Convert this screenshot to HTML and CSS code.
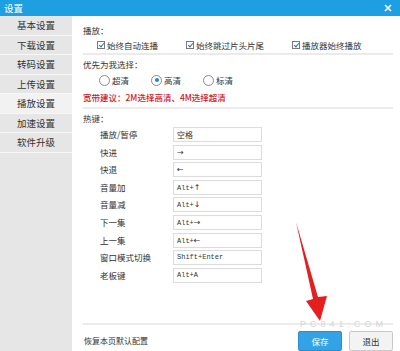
FILE: index.html
```html
<!DOCTYPE html>
<html lang="zh-CN">
<head>
    <meta charset="UTF-8">
    <meta name="viewport" content="width=device-width, initial-scale=1.0">
    <title>设置</title>
    <link rel="stylesheet" href="styles.css">
</head>
<body>
    <div class="window">
        <header class="titlebar">
            <span class="title">设置</span>
            <svg class="close" width="8" height="8" viewBox="0 0 8 8">
                <path d="M1 1L7 7M7 1L1 7" stroke="#fff" stroke-width="1.6" fill="none"/>
            </svg>
        </header>

        <div class="content">
            <ul class="sidebar">
                <li>基本设置</li>
                <li>下载设置</li>
                <li>转码设置</li>
                <li>上传设置</li>
                <li class="active">播放设置</li>
                <li>加速设置</li>
                <li>软件升级</li>
            </ul>

            <main class="main">
                <div class="panel">
                    <p class="group-title first">播放：</p>
                    <div class="check-row">
                        <label class="check"><span class="box"></span>始终自动连播</label>
                        <label class="check"><span class="box"></span>始终跳过片头片尾</label>
                        <label class="check"><span class="box"></span>播放器始终播放</label>
                    </div>
                    <div class="divider"></div>

                    <p class="group-title">优先为我选择：</p>
                    <div class="radio-row">
                        <label class="radio"><span class="dot"></span>超清</label>
                        <label class="radio selected"><span class="dot"></span>高清</label>
                        <label class="radio"><span class="dot"></span>标清</label>
                    </div>
                    <p class="tip">宽带建议：2M选择高清、4M选择超清</p>
                    <div class="divider"></div>

                    <p class="group-title">热键：</p>
                    <div class="hotkeys">
                        <div class="hotkey"><span class="key-name">播放/暂停</span><span class="key-box cn">空格</span></div>
                        <div class="hotkey"><span class="key-name">快进</span><span class="key-box"><span class="arr">→</span></span></div>
                        <div class="hotkey"><span class="key-name">快退</span><span class="key-box"><span class="arr">←</span></span></div>
                        <div class="hotkey"><span class="key-name">音量加</span><span class="key-box">Alt+<span class="arr">↑</span></span></div>
                        <div class="hotkey"><span class="key-name">音量减</span><span class="key-box">Alt+<span class="arr">↓</span></span></div>
                        <div class="hotkey"><span class="key-name">下一集</span><span class="key-box">Alt+<span class="arr">→</span></span></div>
                        <div class="hotkey"><span class="key-name">上一集</span><span class="key-box">Alt+<span class="arr">←</span></span></div>
                        <div class="hotkey"><span class="key-name">窗口模式切换</span><span class="key-box">Shift+Enter</span></div>
                        <div class="hotkey"><span class="key-name">老板键</span><span class="key-box">Alt+A</span></div>
                    </div>
                </div>

                <footer class="footer">
                    <span class="reset">恢复本页默认配置</span>
                    <div class="buttons">
                        <button class="btn primary">保存</button>
                        <button class="btn">退出</button>
                    </div>
                </footer>
            </main>
        </div>

        <!-- annotation drawn over the screenshot -->
        <svg class="arrow" width="400" height="351" viewBox="0 0 400 351">
            <polygon points="296,222 318,297 327,296 320,321 306,301 313,299" fill="#e3201f"/>
        </svg>
        <div class="watermark">PC841.COM</div>
    </div>
</body>
</html>
```

FILE: styles.css
```css
body {
    margin: 0;
    padding: 0;
    background-color: #ffffff;
    font-family: "Noto Sans CJK SC", "Noto Sans", sans-serif;
    color: #333333;
}

.window {
    position: relative;
    width: 400px;
    height: 351px;
    overflow: hidden;
    background-color: #ffffff;
}

.titlebar {
    height: 16px;
    background-color: #1e9fe2;
    display: flex;
    align-items: center;
    justify-content: space-between;
    padding: 0 8px 0 4px;
}

.title {
    color: #ffffff;
    font-size: 9.5px;
    line-height: 16px;
}

.close {
    display: block;
}

.content {
    display: flex;
    height: 335px;
}

.sidebar {
    list-style: none;
    margin: 0;
    padding: 0;
    width: 72px;
    background-color: #e6e6e6;
}

.sidebar li {
    height: 18.5px;
    line-height: 18.5px;
    border-bottom: 1px solid #f7f7f7;
    text-align: center;
    font-size: 9.5px;
    color: #333333;
}

.sidebar li.active {
    background-color: #f2f2f2;
}

.main {
    flex: 1;
    display: flex;
    flex-direction: column;
    padding: 0 7px 0 11px;
}

.panel {
    flex: 1;
}

.group-title {
    margin: 2px 0 0;
    font-size: 8.5px;
    line-height: 14px;
}

.group-title.first {
    margin-top: 7px;
}

.divider {
    height: 2px;
    margin-top: 1px;
    background-color: #ebebeb;
}

.check-row {
    display: flex;
    gap: 28px;
    margin-top: 1px;
    padding-left: 14px;
    height: 14px;
    align-items: center;
}

.check {
    display: flex;
    align-items: center;
    font-size: 8.5px;
    line-height: 14px;
}

.box {
    position: relative;
    width: 6px;
    height: 6px;
    margin-right: 2px;
    border: 1px solid #7a7a7a;
    background-color: #ffffff;
}

.box::after {
    content: "";
    position: absolute;
    left: 1.5px;
    top: -0.5px;
    width: 2px;
    height: 4px;
    border: solid #2a6fb5;
    border-width: 0 1.5px 1.5px 0;
    transform: rotate(40deg);
}

.radio-row {
    display: flex;
    gap: 22px;
    margin-top: 2px;
    padding-left: 16px;
    height: 14px;
    align-items: center;
}

.radio {
    display: flex;
    align-items: center;
    font-size: 8.5px;
    line-height: 14px;
}

.dot {
    width: 9px;
    height: 9px;
    margin-right: 2px;
    border: 1px solid #8a8a8a;
    border-radius: 50%;
    background-color: #ffffff;
    display: flex;
    align-items: center;
    justify-content: center;
}

.radio.selected .dot::after {
    content: "";
    width: 4px;
    height: 4px;
    border-radius: 50%;
    background-color: #1f86d6;
}

.tip {
    margin: 3px 0 0;
    font-size: 8.5px;
    font-weight: 500;
    line-height: 14px;
    color: #d3151d;
}

.tip + .divider {
    margin-top: 3px;
}

.hotkeys {
    margin-top: 2px;
    padding-left: 17px;
    display: flex;
    flex-direction: column;
    gap: 2.6px;
}

.hotkey {
    display: flex;
    align-items: center;
    height: 15px;
}

.key-name {
    width: 73px;
    font-size: 8.5px;
    line-height: 15px;
}

.key-box {
    box-sizing: border-box;
    width: 89px;
    height: 15px;
    padding-left: 3px;
    border: 1px solid #dcdcdc;
    box-shadow: inset 0 0 1px #e8e8e8;
    font-family: "Liberation Mono", monospace;
    font-size: 7px;
    line-height: 13px;
    color: #333333;
}

.key-box.cn {
    font-family: "Noto Sans CJK SC", sans-serif;
    font-size: 8px;
}

.arr {
    font-family: "DejaVu Sans", sans-serif;
    font-size: 8px;
}

.footer {
    height: 26px;
    border-top: 2px solid #ebebeb;
    display: flex;
    justify-content: space-between;
    align-items: flex-end;
}

.reset {
    padding-left: 1px;
    font-size: 8px;
    line-height: 20px;
}

.buttons {
    display: flex;
    gap: 7px;
}

.btn {
    width: 44px;
    height: 20px;
    padding: 0;
    border: 1px solid #c9c9c9;
    border-radius: 2px;
    background-color: #f3f3f3;
    font-family: "Noto Sans CJK SC", sans-serif;
    font-size: 8.5px;
    color: #333333;
}

.btn.primary {
    background-color: #34a3e6;
    border-color: #2a8fd0;
    color: #ffffff;
}

.arrow {
    position: absolute;
    left: 0;
    top: 0;
    pointer-events: none;
}

.watermark {
    position: absolute;
    left: 300px;
    top: 319px;
    font-family: "Liberation Sans", sans-serif;
    font-size: 9px;
    letter-spacing: 4px;
    color: #d6d6d6;
    pointer-events: none;
}
```
